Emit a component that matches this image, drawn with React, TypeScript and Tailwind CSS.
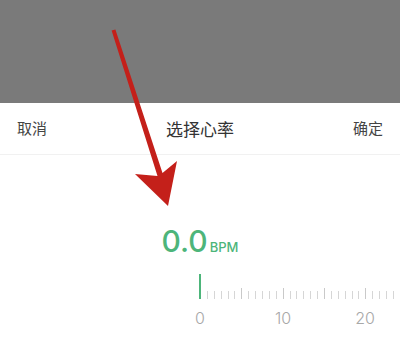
import React from 'react';

const cjk = { fontFamily: '"Noto Sans CJK SC", "Noto Sans", sans-serif' };
const num = { fontFamily: 'Inter, "Noto Sans", sans-serif' };

const Ruler: React.FC = () => {
  const ticks = Array.from({ length: 30 }, (_, i) => i);
  return (
    <div className="relative h-[50px] w-full">
      <div className="absolute left-[199px] top-0 flex items-end gap-[5.9px] h-[25px]">
        {ticks.map((i) =>
          i === 0 ? (
            <div key={i} className="w-[2px] h-[25px] bg-[#4db57a]" />
          ) : (
            <div
              key={i}
              className={`w-px ${i % 6 === 0 ? 'h-[11px] bg-[#c9c9c9]' : 'h-[8px] bg-[#d6d6d6]'}`}
            />
          )
        )}
      </div>
      <div className="absolute top-[32px] left-[190px] w-[20px] text-center text-[16px] font-light text-[#a8a8a8]" style={num}>0</div>
      <div className="absolute top-[32px] left-[273px] w-[20px] text-center text-[16px] font-light text-[#a8a8a8]" style={num}>10</div>
      <div className="absolute top-[32px] left-[355px] w-[20px] text-center text-[16px] font-light text-[#a8a8a8]" style={num}>20</div>
    </div>
  );
};

export default function App() {
  return (
    <div className="relative w-[400px] h-[340px] overflow-hidden bg-white">
      <div className="h-[103px] bg-[#7a7a7a]" />
      <div className="flex h-[52px] items-center justify-between px-[17px] border-b border-[#f1f1f1]" style={cjk}>
        <span className="text-[15px] text-[#444]">取消</span>
        <span className="text-[17px] text-[#333]">选择心率</span>
        <span className="text-[15px] text-[#444]">确定</span>
      </div>
      <div className="flex flex-col pt-[71px]">
        <div className="flex items-baseline justify-center text-[#4db57a]" style={num}>
          <span className="text-[30px] font-medium leading-none">0.0</span>
          <span className="text-[13px] font-medium ml-[2px]">BPM</span>
        </div>
        <div className="mt-[16px]">
          <Ruler />
        </div>
      </div>
      <svg className="absolute inset-0 pointer-events-none" width="400" height="340" viewBox="0 0 400 340">
        <path
          d="M111.6 30.6 L115.4 29.4 L162.5 173 L177 161 L168 206 L135 174 L157.5 176 Z"
          fill="#c4201a"
        />
      </svg>
    </div>
  );
}
